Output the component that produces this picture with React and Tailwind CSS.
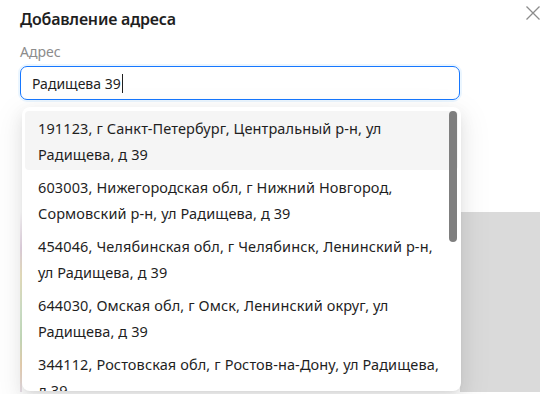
const options = [
  '191123, г Санкт-Петербург, Центральный р-н, ул Радищева, д 39',
  '603003, Нижегородская обл, г Нижний Новгород, Сормовский р-н, ул Радищева, д 39',
  '454046, Челябинская обл, г Челябинск, Ленинский р-н, ул Радищева, д 39',
  '644030, Омская обл, г Омск, Ленинский округ, ул Радищева, д 39',
  '344112, Ростовская обл, г Ростов-на-Дону, ул Радищева, д 39',
  '432000, Ульяновская обл, г Ульяновск, ул Радищева, д 39',
];

export default function App() {
  return (
    <div className="relative h-[394px] w-[555px] overflow-hidden bg-white font-['Noto_Sans',sans-serif] text-[#1f1f1f]">
      <button className="absolute right-[15px] top-[6px] text-[#8c8c8c]">
        <svg width="14" height="14" viewBox="0 0 14 14" fill="none" stroke="currentColor" strokeWidth="1.3">
          <path d="M0.5 0.5L13.5 13.5M13.5 0.5L0.5 13.5" />
        </svg>
      </button>

      <div className="px-5 pt-[6px]">
        <h2 className="text-[16px] font-semibold leading-[26px] tracking-[-0.2px]">Добавление адреса</h2>

        <div className="mt-[9px] text-[14px] leading-[22px] text-[#8c8c8c]">Адрес</div>

        <div className="relative mt-[3px] w-[440px]">
          <div className="flex h-[34px] items-center rounded-[7px] border border-[#1677ff] px-[11px] text-[14px] shadow-[0_0_0_2px_rgba(5,145,255,0.08)]">
            <span>Радищева 39</span>
            <span className="ml-px h-[19px] w-px bg-[#1f1f1f]" />
          </div>

          {/* dropdown */}
          <div className="absolute left-[2px] top-[41px] z-10 h-[284px] w-[439px] overflow-hidden rounded-[8px] bg-white py-1 shadow-[0_6px_16px_0_rgba(0,0,0,0.08),0_3px_6px_-4px_rgba(0,0,0,0.12),0_9px_28px_8px_rgba(0,0,0,0.05)]">
            <div className="relative">
              {options.map((o, i) => (
                <div
                  key={i}
                  className={`mx-[3px] rounded-[4px] py-[3.5px] pl-[13px] pr-[18px] text-[14.5px] leading-[26px] tracking-[0.12px] ${i === 0 ? 'bg-[#f5f5f5]' : ''}`}
                >
                  {o}
                </div>
              ))}
              <div className="absolute right-[4px] top-0 h-[131px] w-[8px] rounded-full bg-[#7f7f7f]" />
            </div>
          </div>
        </div>

        {/* map area behind dropdown */}
        <div className="mt-[112px] flex h-[180px] w-[520px]">
          <div className="w-[2px] bg-[linear-gradient(to_bottom,#fff_0%,#ead9e8_20%,#f2e9c6_35%,#d9ecd2_55%,#cfe6c4_70%,#f3d9b8_85%,#e8e0ea_100%)]" />
          <div className="w-[438px]" />
          <div className="w-[80px] bg-[#dadada]" />
        </div>
      </div>
    </div>
  );
}
